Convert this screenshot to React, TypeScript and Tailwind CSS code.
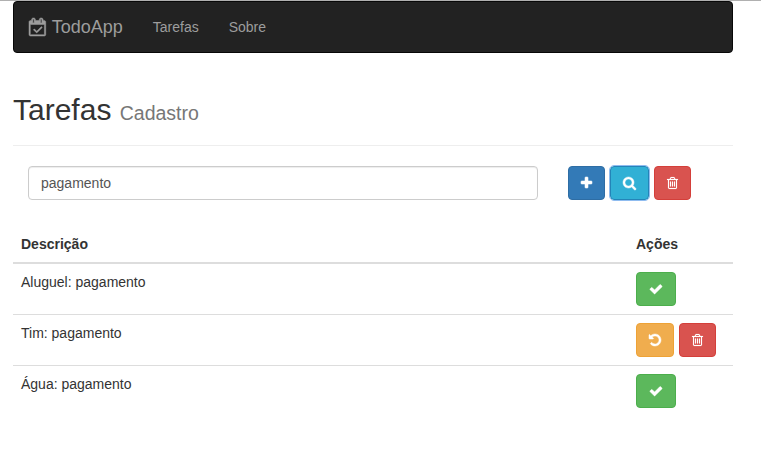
import type { ReactNode } from 'react';

const icons = {
  calendar: {
    box: '0 0 1664 1792',
    stroke: 50,
    d: 'M1303 964l-512 512q-10 9-23 9t-23-9l-288-288q-9-10-9-23t9-22l46-46q9-9 22-9t23 9l220 220 444-444q10-9 23-9t22 9l46 46q9 9 9 22t-9 23zm-1175 700h1408v-1024h-1408v1024zm384-1216v-288q0-14-9-23t-23-9h-64q-14 0-23 9t-9 23v288q0 14 9 23t23 9h64q14 0 23-9t9-23zm768 0v-288q0-14-9-23t-23-9h-64q-14 0-23 9t-9 23v288q0 14 9 23t23 9h64q14 0 23-9t9-23zm384-64v1280q0 52-38 90t-90 38h-1408q-52 0-90-38t-38-90v-1280q0-52 38-90t90-38h128v-96q0-66 47-113t113-47h64q66 0 113 47t47 113v96h384v-96q0-66 47-113t113-47h64q66 0 113 47t47 113v96h128q52 0 90 38t38 90z',
  },
  plus: {
    box: '192 0 1408 1792',
    stroke: 70,
    d: 'M1600 736v192q0 40-28 68t-68 28h-416v416q0 40-28 68t-68 28h-192q-40 0-68-28t-28-68v-416h-416q-40 0-68-28t-28-68v-192q0-40 28-68t68-28h416v-416q0-40 28-68t68-28h192q40 0 68 28t28 68v416h416q40 0 68 28t28 68z',
  },
  search: {
    box: '64 0 1664 1792',
    stroke: 60,
    d: 'M1216 832q0-185-131.5-316.5t-316.5-131.5-316.5 131.5-131.5 316.5 131.5 316.5 316.5 131.5 316.5-131.5 131.5-316.5zm512 832q0 52-38 90t-90 38q-54 0-90-38l-343-342q-179 124-399 124-143 0-273.5-55.5t-225-150-150-225-55.5-273.5 55.5-273.5 150-225 225-150 273.5-55.5 273.5 55.5 225 150 150 225 55.5 273.5q0 220-124 399l343 343q37 37 37 90z',
  },
  trash: {
    box: '192 0 1408 1792',
    stroke: 20,
    d: 'M704 736v576q0 14-9 23t-23 9h-64q-14 0-23-9t-9-23v-576q0-14 9-23t23-9h64q14 0 23 9t9 23zm256 0v576q0 14-9 23t-23 9h-64q-14 0-23-9t-9-23v-576q0-14 9-23t23-9h64q14 0 23 9t9 23zm256 0v576q0 14-9 23t-23 9h-64q-14 0-23-9t-9-23v-576q0-14 9-23t23-9h64q14 0 23 9t9 23zm128 724v-948h-896v948q0 22 7 40.5t14.5 27 10.5 8.5h832q3 0 10.5-8.5t14.5-27 7-40.5zm-672-1076h448l-48-117q-7-9-17-11h-317q-10 2-17 11zm928 32v64q0 14-9 23t-23 9h-96v948q0 83-47 143.5t-113 60.5h-832q-66 0-113-58.5t-47-141.5v-952h-96q-14 0-23-9t-9-23v-64q0-14 9-23t23-9h309l70-167q15-37 54-63t79-26h320q40 0 79 26t54 63l70 167h309q14 0 23 9t9 23z',
  },
  check: {
    box: '0 0 1792 1792',
    stroke: 60,
    d: 'M1671 566q0 40-28 68l-724 724-136 136q-28 28-68 28t-68-28l-136-136-362-362q-28-28-28-68t28-68l136-136q28-28 68-28t68 28l294 295 656-657q28-28 68-28t68 28l136 136q28 28 28 68z',
  },
  undo: {
    box: '128 0 1536 1792',
    stroke: 60,
    d: 'M1664 896q0 156-61 298t-164 245-245 164-298 61q-172 0-327-72.5t-264-204.5q-7-10-6.5-22.5t8.5-20.5l137-138q10-9 25-9 16 2 23 12 73 95 179 147t225 52q104 0 198.5-40.5t163.5-109.5 109.5-163.5 40.5-198.5-40.5-198.5-109.5-163.5-163.5-109.5-198.5-40.5q-98 0-188 35.5t-160 101.5l137 138q31 30 14 69-17 40-59 40h-448q-26 0-45-19t-19-45v-448q0-42 40-59 39-17 69 14l130 129q107-101 244.5-156.5t284.5-55.5q156 0 298 61t245 164 164 245 61 298z',
  },
};

type IconName = keyof typeof icons;

function Icon({ name, className }: { name: IconName; className: string }) {
  const { box, stroke, d } = icons[name];
  return (
    <svg
      viewBox={box}
      fill="currentColor"
      stroke="currentColor"
      strokeWidth={stroke}
      className={`overflow-visible ${className}`}
      aria-hidden="true"
    >
      <path d={d} />
    </svg>
  );
}

const variants = {
  primary: 'w-[37px] bg-[#337ab7] border-[#2e6da4]',
  info: 'w-[39px] bg-[#31b0d5] border-[#2484b8] outline-1 outline-[#8fbcf0] outline-offset-0',
  danger: 'w-[37px] bg-[#d9534f] border-[#d43f3a]',
  success: 'w-[40px] bg-[#5cb85c] border-[#4cae4c]',
  warning: 'w-[38px] bg-[#f0ad4e] border-[#eea236]',
};

function IconButton({ variant, icon, label }: { variant: keyof typeof variants; icon: IconName; label: string }) {
  return (
    <button
      aria-label={label}
      className={`flex h-[34px] shrink-0 items-center justify-center rounded border text-white ${variants[variant]}`}
    >
      <Icon name={icon} className="h-3.5 w-auto" />
    </button>
  );
}

function Row({ text, children }: { text: string; children: ReactNode }) {
  return (
    <div className="flex border-t border-[#ddd] py-2 first:border-t-0">
      <div className="w-[615px] px-2">{text}</div>
      <div className="flex gap-[5px] pl-2">{children}</div>
    </div>
  );
}

export default function App() {
  return (
    <div className="h-[471px] w-[761px] overflow-hidden border-t border-[#b0b0b0] bg-white font-['Liberation_Sans',Arial,sans-serif] text-sm leading-5 text-[#333]">
      <div className="ml-[13px] w-[720px]">
        <nav className="flex h-[52px] items-center rounded border border-[#080808] bg-[#222] pl-[15px] text-[#9d9d9d]">
          <a className="flex items-center gap-1.5 text-lg leading-5">
            <Icon name="calendar" className="h-[18px] w-auto" />
            TodoApp
          </a>
          <a className="ml-[30px]">Tarefas</a>
          <a className="ml-[30px]">Sobre</a>
        </nav>

        <header className="mt-10 h-[53px] border-b border-[#eee]">
          <h2 className="text-[30px] leading-[33px] font-medium">
            Tarefas <small className="text-[19.5px] leading-none font-normal text-[#777]">Cadastro</small>
          </h2>
        </header>

        <div className="mt-5 flex px-[15px]">
          <input
            className="h-[34px] w-[510px] rounded border border-[#ccc] px-3 text-[#555] shadow-[inset_0_1px_1px_rgba(0,0,0,0.075)]"
            defaultValue="pagamento"
          />
          <div className="ml-[30px] flex gap-[5px]">
            <IconButton variant="primary" icon="plus" label="Adicionar" />
            <IconButton variant="info" icon="search" label="Pesquisar" />
            <IconButton variant="danger" icon="trash" label="Limpar" />
          </div>
        </div>

        <section className="mt-[26px]">
          <div className="flex border-b-2 border-[#ddd] py-2 font-bold">
            <div className="w-[615px] px-2">Descrição</div>
            <div className="pl-2">Ações</div>
          </div>
          <div>
            <Row text="Aluguel: pagamento">
              <IconButton variant="success" icon="check" label="Concluir" />
            </Row>
            <Row text="Tim: pagamento">
              <IconButton variant="warning" icon="undo" label="Reabrir" />
              <IconButton variant="danger" icon="trash" label="Excluir" />
            </Row>
            <Row text="Água: pagamento">
              <IconButton variant="success" icon="check" label="Concluir" />
            </Row>
          </div>
        </section>
      </div>
    </div>
  );
}
